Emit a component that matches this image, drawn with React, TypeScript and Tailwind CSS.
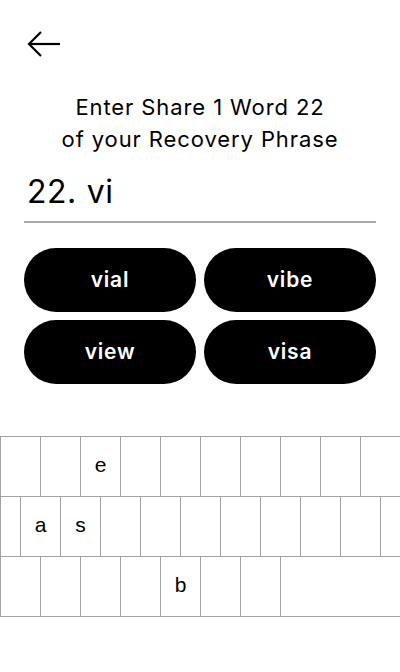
import React from "react";

const Key = ({ label = "", className = "w-10" }: { label?: string; className?: string }) => (
  <div
    className={`${className} h-[60px] shrink-0 border-l border-t border-[#a3a3a3] flex items-center justify-center pb-[3px] text-[21px] text-black`}
    style={{ fontFamily: '"Liberation Sans", Arial, sans-serif' }}
  >
    {label}
  </div>
);

export default function App() {
  const row1 = ["", "", "e", "", "", "", "", "", "", ""];
  const row2 = ["a", "s", "", "", "", "", "", "", ""];
  const row3 = ["", "", "", "", "b", "", ""];
  return (
    <div
      className="w-[400px] h-[672px] bg-white overflow-hidden text-black"
      style={{ fontFamily: 'Inter, "Noto Sans", sans-serif' }}
    >
      <div className="px-6">
        <div className="pt-[30px] pl-[3px] h-[58px]">
          <svg width="34" height="28" viewBox="0 0 34 28" fill="none" stroke="black" strokeWidth="2.2" strokeLinecap="butt" strokeLinejoin="miter">
            <path d="M2 14H33" />
            <path d="M14 2L2 14L14 26" />
          </svg>
        </div>
        <h1 className="mt-[33px] text-center text-[22px] leading-8 font-normal tracking-[0.9px]">
          Enter Share 1 Word 22
          <br />
          of your Recovery Phrase
        </h1>
        <div className="mt-[17px] h-[40px] text-[32px] leading-[40px] pl-[3px] tracking-[0.5px] whitespace-pre">
          22.<span className="ml-[10px]">vi</span>
        </div>
        <div className="mt-[9px] h-[2px] bg-[#a8a8a8]" />
        <div className="mt-[25px] grid grid-cols-2 gap-2">
          {["vial", "vibe", "view", "visa"].map((w) => (
            <button
              key={w}
              className="h-16 rounded-full bg-black text-white text-[21px] font-semibold tracking-[0.8px] flex items-center justify-center"
            >
              {w}
            </button>
          ))}
        </div>
      </div>
      <div className="mt-[52px] border-b border-[#a3a3a3] flex flex-col">
        <div className="flex">
          {row1.map((k, i) => (
            <Key key={i} label={k} />
          ))}
        </div>
        <div className="flex">
          <Key className="w-5" />
          {row2.map((k, i) => (
            <Key key={i} label={k} />
          ))}
          <Key className="w-10" />
        </div>
        <div className="flex">
          {row3.map((k, i) => (
            <Key key={i} label={k} />
          ))}
          <Key className="flex-1" />
        </div>
      </div>
    </div>
  );
}
